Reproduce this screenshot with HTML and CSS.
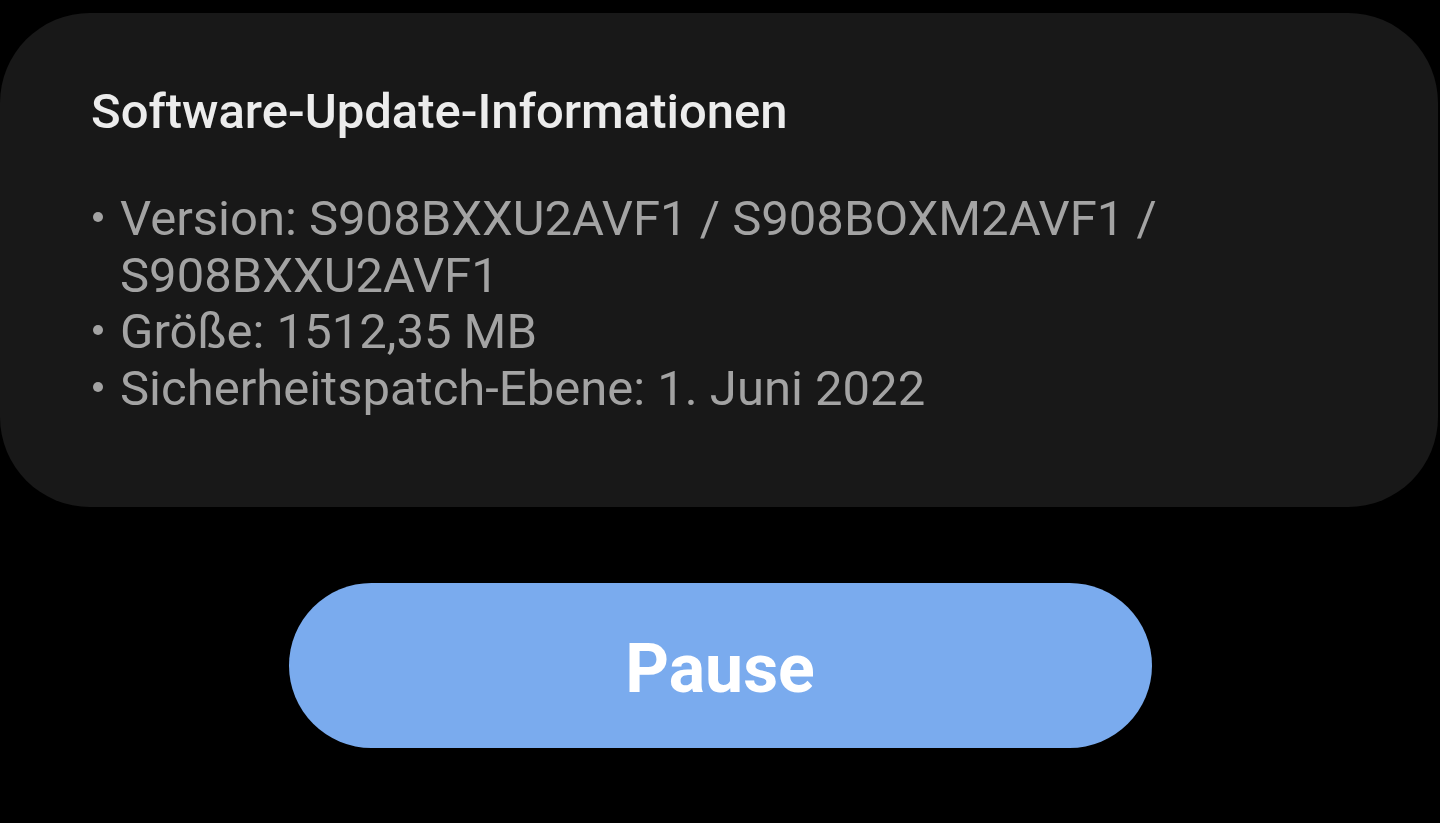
FILE: index.html
```html
<!DOCTYPE html>
<html lang="de">
<head>
<meta charset="utf-8">
<link rel="stylesheet" href="styles.css">
</head>
<body>
<main class="screen">
  <section class="card">
    <h1 class="title">Software-Update-Informationen</h1>
    <ul class="info">
      <li>Version: S908BXXU2AVF1 / S908BOXM2AVF1 / S908BXXU2AVF1</li>
      <li>Größe: 1512,35 MB</li>
      <li>Sicherheitspatch-Ebene: 1. Juni 2022</li>
    </ul>
  </section>
  <div class="actions">
    <button class="pause">Pause</button>
  </div>
</main>
</body>
</html>
```
FILE: styles.css
```css
html, body {
  margin: 0;
  padding: 0;
  background: #000;
}
body {
  font-family: Roboto, "Noto Sans", sans-serif;
  width: 1440px;
  height: 823px;
  overflow: hidden;
}
.screen {
  display: flex;
  flex-direction: column;
  padding-top: 13px;
}
.card {
  box-sizing: border-box;
  width: 1438px;
  height: 494px;
  background: #181818;
  border-radius: 90px;
  padding: 70px 91px 0 91px;
}
.title {
  margin: 0;
  font-size: 49px;
  font-weight: 500;
  line-height: 57px;
  color: #ececec;
}
.info {
  list-style: none;
  margin: 51px 0 0 0;
  padding: 0;
  color: #a3a3a3;
  font-size: 49px;
  line-height: 56.5px;
}
.info li {
  position: relative;
  padding-left: 29px;
}
.info li::before {
  content: "";
  position: absolute;
  left: 2px;
  top: 21px;
  width: 10px;
  height: 10px;
  border-radius: 50%;
  background: #a3a3a3;
}
.actions {
  display: flex;
  justify-content: center;
  padding-top: 76px;
}
.pause {
  box-sizing: border-box;
  width: 863px;
  height: 165px;
  border: none;
  border-radius: 83px;
  background: #7aabee;
  color: #fff;
  font-family: Roboto, "Noto Sans", sans-serif;
  font-size: 68px;
  font-weight: 700;
  padding: 6px 0 0 0;
}
```
